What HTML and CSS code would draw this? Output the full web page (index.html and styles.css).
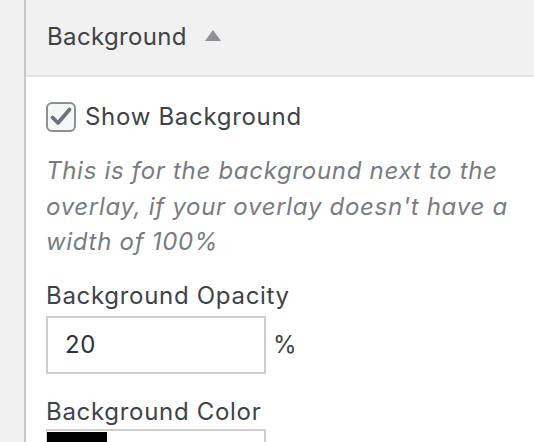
FILE: index.html
```html
<!DOCTYPE html>
<html>
<head>
<meta charset="utf-8">
<link rel="stylesheet" href="styles.css">
</head>
<body>
<div class="frame">
  <div class="gutter"></div>
  <div class="panel">
    <div class="section-head">
      <span class="section-title">Background</span>
      <span class="caret"></span>
    </div>
    <div class="section-body">
      <label class="check-row">
        <span class="checkbox">
          <svg width="24" height="22" viewBox="0 0 24 22"><path d="M3.5 11.5 L9 17 L20.5 3.5" fill="none" stroke="#6b747c" stroke-width="3.8" stroke-linecap="round" stroke-linejoin="round"/></svg>
        </span>
        <span class="check-label">Show Background</span>
      </label>
      <p class="desc">This is for the background next to the overlay, if your overlay doesn't have a width of 100%</p>
      <div class="field">
        <div class="field-label">Background Opacity</div>
        <div class="input-row">
          <div class="text-input">20</div>
          <span class="unit">%</span>
        </div>
      </div>
      <div class="field">
        <div class="field-label">Background Color</div>
        <div class="color-input"><span class="swatch"></span></div>
      </div>
    </div>
  </div>
</div>
</body>
</html>
```
FILE: styles.css
```css
html, body {
  margin: 0;
  padding: 0;
  height: 100%;
  overflow: hidden;
}
body {
  font-family: Inter, "Noto Sans", sans-serif;
  color: #3c434a;
  background: #ffffff;
}
.frame {
  display: flex;
  height: 442px;
  overflow: hidden;
}
.gutter {
  width: 24px;
  background: #f1f1f1;
  flex: none;
}
.panel {
  flex: 1;
  border-left: 2px solid #c7c8cb;
  background: #ffffff;
}
.section-head {
  background: #f1f1f1;
  border-bottom: 2px solid #e2e2e2;
  display: flex;
  align-items: center;
  padding-left: 21px;
  box-sizing: border-box;
  height: 77px;
}
.section-title {
  font-size: 24px;
  letter-spacing: 0.35px;
  color: #3c434a;
  padding-bottom: 2px;
}
.caret {
  width: 0;
  height: 0;
  border-left: 8px solid transparent;
  border-right: 8px solid transparent;
  border-bottom: 11px solid #8f9195;
  margin-left: 18px;
  margin-bottom: 4px;
}
.section-body {
  padding: 25px 0 0 20px;
  font-size: 24px;
  letter-spacing: 0.7px;
}
.check-row {
  display: flex;
  align-items: center;
}
.checkbox {
  width: 30px;
  height: 30px;
  box-sizing: border-box;
  border: 2px solid #8c8f94;
  border-radius: 6px;
  background: #f6f7f7;
  display: flex;
  align-items: center;
  justify-content: center;
  flex: none;
}
.check-label {
  margin-left: 9px;
  line-height: 30px;
  color: #3c434a;
}
.desc {
  margin: 21px 0 0 0;
  font-style: italic;
  line-height: 35.5px;
  color: #787c82;
  width: 470px;
}
.field {
  margin-top: 21px;
}
.field-label {
  line-height: 30px;
  color: #3c434a;
}
.input-row {
  display: flex;
  align-items: center;
  margin-top: 5px;
}
.text-input {
  width: 220px;
  height: 58px;
  box-sizing: border-box;
  border: 2px solid #cfcfcf;
  padding-left: 17px;
  display: flex;
  align-items: center;
  color: #2c3338;
}
.unit {
  margin-left: 7px;
}
.field + .field {
  margin-top: 23px;
}
.color-input {
  margin-top: 2px;
  width: 220px;
  height: 40px;
  box-sizing: border-box;
  border: 2px solid #cfcfcf;
  border-left-width: 1px;
  padding: 1px 0 0 0;
}
.swatch {
  display: block;
  width: 60px;
  height: 100%;
  background: #000000;
}
```
